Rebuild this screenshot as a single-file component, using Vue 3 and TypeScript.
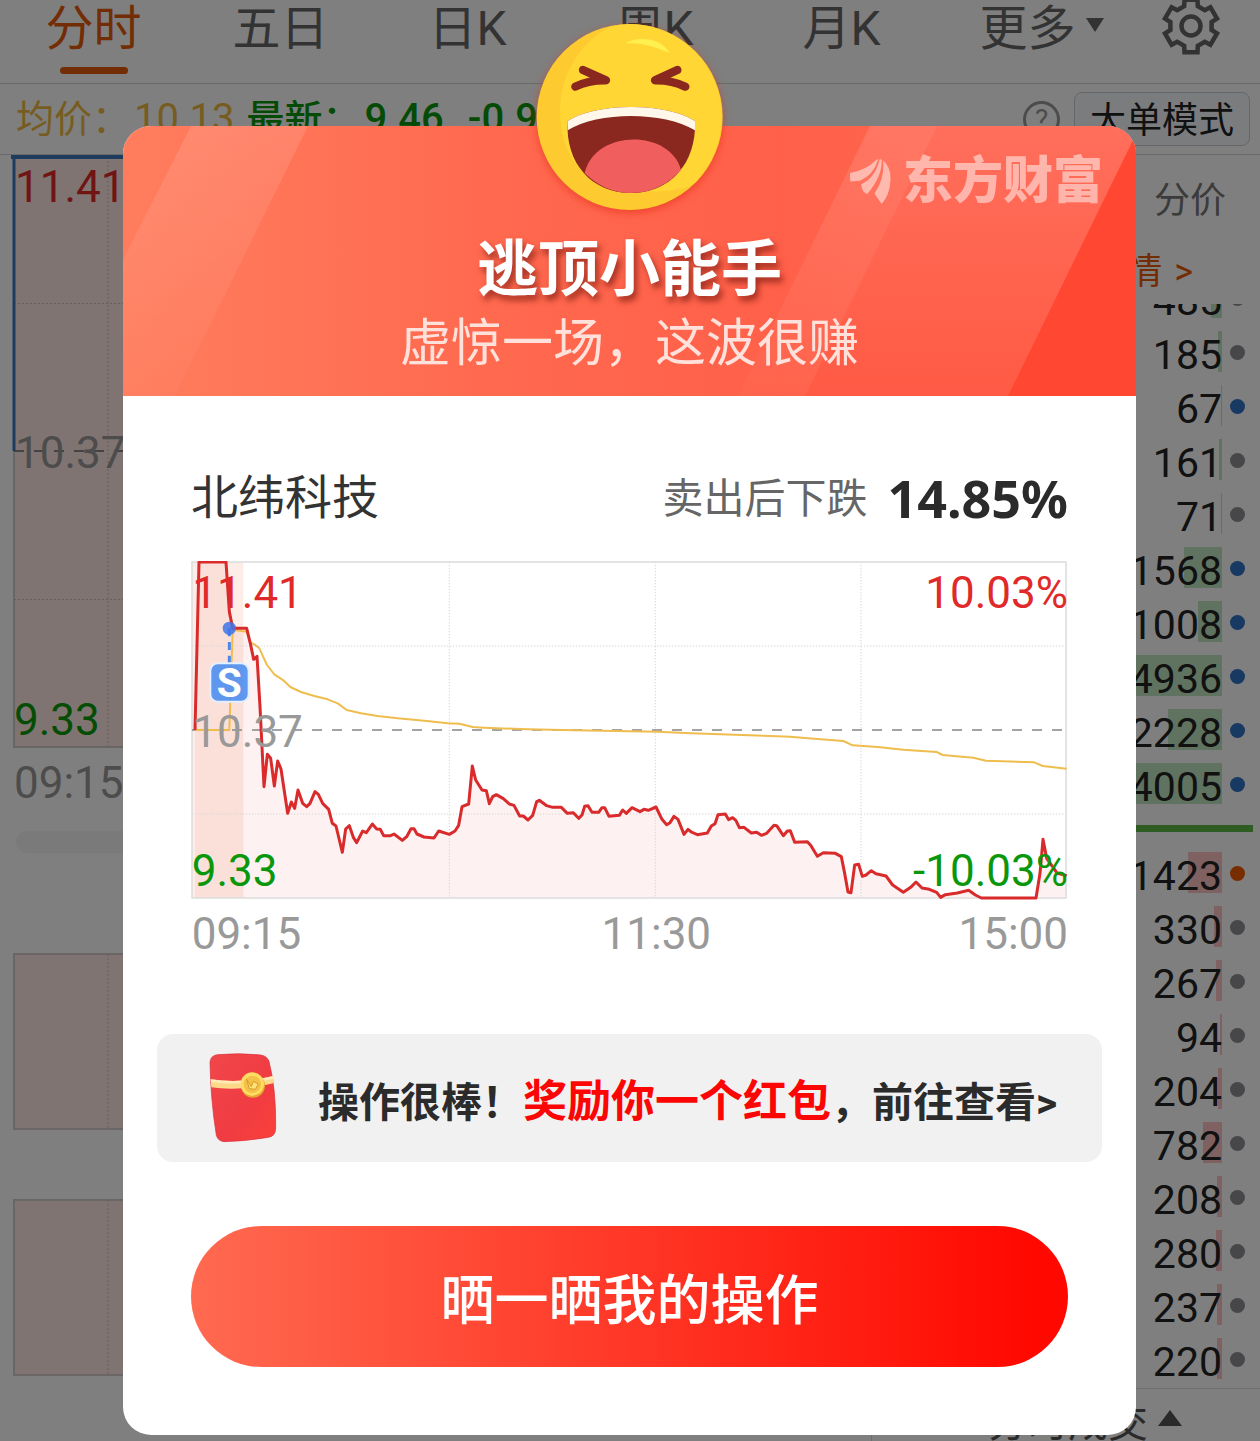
<script setup lang="ts">
type Tone = 'blue' | 'gray' | 'orange'
interface Tick { volume: number; tone: Tone }

const tabs = ['分时', '五日', '日K', '周K', '月K']

const sells: Tick[] = [
  { volume: 485, tone: 'gray' },
  { volume: 185, tone: 'gray' },
  { volume: 67, tone: 'blue' },
  { volume: 161, tone: 'gray' },
  { volume: 71, tone: 'gray' },
  { volume: 1568, tone: 'blue' },
  { volume: 1008, tone: 'blue' },
  { volume: 4936, tone: 'blue' },
  { volume: 2228, tone: 'blue' },
  { volume: 4005, tone: 'blue' },
]
const buys: Tick[] = [
  { volume: 1423, tone: 'orange' },
  { volume: 330, tone: 'gray' },
  { volume: 267, tone: 'gray' },
  { volume: 94, tone: 'gray' },
  { volume: 204, tone: 'gray' },
  { volume: 782, tone: 'gray' },
  { volume: 208, tone: 'gray' },
  { volume: 280, tone: 'gray' },
  { volume: 237, tone: 'gray' },
  { volume: 220, tone: 'gray' },
]
const barWidth = (volume: number) => `${Math.max(1, Math.floor(volume / 41))}px`

// Outline of the settings gear: six teeth around the centre
const gearPoints = Array.from({ length: 6 }, (_, k) => {
  const at = (radius: number, offset: number) => {
    const a = ((k * 60 - 90 + offset) * Math.PI) / 180
    return `${(30 + radius * Math.cos(a)).toFixed(1)},${(30 + radius * Math.sin(a)).toFixed(1)}`
  }
  return [at(21, -19), at(27, -14), at(27, 14), at(21, 19)].join(' ')
}).join(' ')

const price =
  '12,507 24,3 105,3 115,152 125,202 167,202 179,252 188,295 198,286 207,437 219,677 229,580 239,592 250,675 260,600 270,624 290,757 301,723 311,742 321,687 335,727 347,737 357,727 372,692 382,700 395,727 413,745 424,787 435,795 454,874 464,804 475,794 487,829 497,845 515,810 526,815 544,789 557,804 568,805 578,824 599,824 609,819 634,838 647,827 660,803 669,803 678,819 699,828 729,831 743,810 775,820 792,810 803,793 813,737 833,729 844,615 ' +
  '854,657 873,687 886,689 895,728 905,707 916,701 937,713 955,729 969,733 986,765 997,765 1011,777 1025,763 1037,722 1045,718 1067,734 1085,739 1111,739 1129,757 1147,755 1163,772 1173,762 1181,736 1191,734 1203,754 1223,754 1233,740 1241,740 1254,766 1285,763 1295,747 1306,757 1323,740 1347,752 1359,745 1372,748 1395,738 1413,775 1427,791 1437,785 1449,766 1461,775 1479,820 1491,805 1501,813 1519,821 1549,816 1561,795 1572,788 1581,761 1603,759 1613,776 1625,770 1635,779 1645,800 1659,799 1681,816 1697,814 1711,823 1727,817 1749,793 1757,794 ' +
  '1777,824 1789,810 1798,809 1811,844 1849,842 1859,853 1879,886 1897,875 1933,877 1951,887 1961,937 1971,993 1980,995 1991,912 2003,910 2014,946 2025,942 2041,929 2055,938 2085,945 2105,972 2137,994 2159,979 2175,963 2193,981 2215,985 2237,994 2249,1009 2263,1001 2299,996 2333,988 2353,1002 2371,1011 2535,1011 2547,937 2556,835 2567,892 2599,937 2627,944'
const priceArea = `12,1011 ${price} 2627,1011`
const average =
  '12,507 115,507 125,206 167,212 177,244 190,250 205,262 228,312 250,340 277,358 298,378 330,393 370,405 410,415 440,427 467,447 510,457 560,465 620,472 700,479 770,487 805,488 845,498 880,500 1010,505 1150,508 1400,512 1500,517 1737,525 1797,527 1870,533 1957,540 1985,553 2060,558 2137,566 2237,573 2255,582 2347,590 2385,599 2530,604 2555,615 2627,623'
</script>

<template>
  <div class="app">
    <main class="page">
      <nav class="tabs">
        <button v-for="(tab, i) in tabs" :key="tab" class="tab" :class="{ active: i === 0 }">{{ tab }}</button>
        <button class="tab more">更多<span class="caret"></span></button>
        <button class="tab gear" aria-label="设置">
          <svg viewBox="0 0 60 60" width="60" height="60" fill="none" stroke="#666" stroke-width="4.5">
            <polygon :points="gearPoints" stroke-linejoin="miter" />
            <circle cx="30" cy="30" r="9.5" />
          </svg>
        </button>
      </nav>

      <section class="info">
        <span class="avg">均价：</span><span class="avg num">10.13</span>
        <span class="now first">最新：</span><span class="now num">9.46</span><span class="now num diff">-0.91</span>
        <span class="help">?</span>
        <button class="mode">大单模式</button>
      </section>

      <section class="columns">
        <div class="left">
          <svg class="back-chart" viewBox="0 0 871 1233">
            <g fill="#ffe9e2" stroke="#d2cdca" stroke-width="2">
              <rect x="14" y="2" width="850" height="590" />
              <rect x="14" y="799" width="850" height="175" />
              <rect x="14" y="1045" width="850" height="175" />
            </g>
            <g stroke="#c8bfbb" stroke-width="1" stroke-dasharray="2 2">
              <path d="M108 2V592M108 799V974M108 1045V1220M14 148.500H864M14 444.500H864" />
            </g>
            <path d="M14 296H864" stroke="#888" stroke-width="2" stroke-dasharray="10 10" />
            <path d="M11 2H864" stroke="#3d78bd" stroke-width="4" />
            <path d="M14 2V296" stroke="#3d78bd" stroke-width="3" />
            <rect x="16" y="676" width="840" height="22" rx="11" fill="#f4f4f4" />
            <g font-size="44">
              <text x="15" y="47" fill="#e02828">11.41</text>
              <text x="15" y="313" fill="#999">10.37</text>
              <text x="14" y="580" fill="#0a9a0a">9.33</text>
              <text x="14" y="643" fill="#999">09:15</text>
            </g>
          </svg>
        </div>

        <aside class="right">
          <div class="switch">分价</div>
          <a class="detail" href="#"><span>详情</span><span>&gt;</span></a>
          <div class="ticks">
            <div v-for="tick in sells" :key="tick.volume" class="tick">
              <span class="volume"><i class="bar green" :style="{ width: barWidth(tick.volume) }"></i><b>{{ tick.volume }}</b></span>
              <i class="dot" :class="tick.tone"></i>
            </div>
          </div>
          <div class="divider"></div>
          <div v-for="tick in buys" :key="tick.volume" class="tick">
            <span class="volume"><i class="bar red" :style="{ width: barWidth(tick.volume) }"></i><b>{{ tick.volume }}</b></span>
            <i class="dot" :class="tick.tone"></i>
          </div>
          <div class="deals">分时成交<span class="up"></span></div>
        </aside>
      </section>
    </main>

    <div class="mask">
      <div class="dialog" role="dialog" aria-labelledby="dialog-title">
        <header class="hero">
          <svg class="hero-bg" viewBox="0 0 1013 270" preserveAspectRatio="none">
            <defs>
              <linearGradient id="hero-base" x1="0" x2="1" y1="0" y2="0">
                <stop offset="0" stop-color="#ff7d5e" />
                <stop offset=".35" stop-color="#ff6a4f" />
                <stop offset=".65" stop-color="#ff6049" />
                <stop offset="1" stop-color="#ff6c56" />
              </linearGradient>
              <linearGradient id="hero-band" x1="0" x2="0" y1="0" y2="1">
                <stop offset="0" stop-color="#fff" stop-opacity=".12" />
                <stop offset="1" stop-color="#fff" stop-opacity=".02" />
              </linearGradient>
              <linearGradient id="hero-side" x1="0" x2="0" y1="0" y2="1">
                <stop offset="0" stop-color="#ff6f5c" />
                <stop offset="1" stop-color="#ff5a44" />
              </linearGradient>
            </defs>
            <rect width="1013" height="270" fill="url(#hero-base)" />
            <polygon points="68,0 185,0 52,270 0,270 0,134" fill="url(#hero-band)" />
            <polygon points="814,0 1013,0 1013,270 682,270" fill="url(#hero-side)" />
            <polygon points="747,0 814,0 682,270 615,270" fill="url(#hero-band)" />
            <polygon points="1013,8 1013,270 885,270" fill="#ff4731" />
          </svg>

          <div class="brand">
            <svg viewBox="0 0 124 136" width="41" height="45" fill="#fff">
              <path d="M0 42Q48 34 80 2L86 0Q70 50 30 66L2 68Q-2 55 0 42Z" />
              <path d="M34 76Q76 58 90 0L96 2Q98 52 52 106Q36 100 34 76Z" />
              <path d="M74 104Q106 60 100 4Q126 28 122 68Q120 108 96 136Q86 122 74 104Z" />
            </svg>
            <span>东方财富</span>
          </div>

          <svg class="emoji" viewBox="0 0 660 630" width="220" height="210">
            <circle cx="329" cy="321" r="279" fill="#fdca30" />
            <path d="M270 50C180 100 120 190 120 305C120 450 220 570 385 545C450 543 520 540 540 500A279 279 0 0 0 329 42Q300 42 270 50Z" fill="#ffd634" />
            <path d="M316 99C350 80 420 78 449 129C410 112 370 98 316 99Z" fill="#fff04f" />
            <g fill="none" stroke="#8a271f" stroke-width="25" stroke-linecap="round" stroke-linejoin="round">
              <path d="M189 180L258 211Q205 210 166 230" />
              <path d="M472 180L405 211Q455 210 496 230" />
            </g>
            <path d="M143 333C230 277 438 277 525 333C530 460 450 549 333 549C215 549 135 460 143 333Z" fill="#8a271f" />
            <path d="M143 333C230 277 438 277 525 333V361C430 304 235 304 143 361Z" fill="#fff8ea" />
            <path d="M194 489C225 357 450 357 483 480C445 523 395 549 333 549C275 549 230 525 194 489Z" fill="#f15e5e" />
          </svg>

          <h1 id="dialog-title">逃顶小能手</h1>
          <p>虚惊一场，这波很赚</p>
        </header>

        <section class="content">
          <div class="stock">
            <span class="name">北纬科技</span>
            <span class="label">卖出后下跌</span>
            <strong>14.85%</strong>
          </div>

          <svg class="chart" viewBox="0 0 2631 1200">
            <rect x="3" y="3" width="154" height="1008" fill="#fdede6" />
            <polygon :points="priceArea" fill="#e43030" fill-opacity=".065" />
            <g fill="none">
              <path d="M775 3V1011M1393 3V1011M2010 3V1011M3 255H2625M3 759H2625" stroke="#d6d6d6" stroke-width="3" stroke-dasharray="4 5" />
              <rect x="3" y="3" width="2622" height="1008" stroke="#dfdfdf" stroke-width="5" />
              <path d="M3 507H2625" stroke="#858585" stroke-width="5" stroke-dasharray="30 30" />
              <polyline :points="average" stroke="#efbd4e" stroke-width="6" stroke-linejoin="round" />
              <polyline :points="price" stroke="#d92b2b" stroke-width="9" stroke-linejoin="round" />
            </g>
            <g font-size="132">
              <text x="4" y="141" fill="#e02a2a">11.41</text>
              <text x="2631" y="141" text-anchor="end" fill="#e02a2a">10.03%</text>
              <text x="4" y="557" fill="#999">10.37</text>
              <text x="2" y="974" fill="#0b970b">9.33</text>
              <text x="2631" y="974" text-anchor="end" fill="#0b970b">-10.03%</text>
              <g fill="#999">
                <text x="2" y="1164">09:15</text>
                <text x="1396" y="1164" text-anchor="middle">11:30</text>
                <text x="2631" y="1164" text-anchor="end">15:00</text>
              </g>
            </g>
            <path d="M115 202V308" stroke="#4c86e8" stroke-width="9" stroke-dasharray="24 17" />
            <circle cx="115" cy="202" r="20" fill="#3f74e8" fill-opacity=".85" />
            <rect x="58" y="307" width="115" height="115" rx="22" fill="#4f8ff0" fill-opacity=".9" stroke="#e4efff" stroke-width="6" />
            <text x="115" y="407" text-anchor="middle" class="marker">S</text>
          </svg>

          <a class="reward" href="#">
            <svg viewBox="0 0 300 360" width="100" height="120">
              <defs>
                <linearGradient id="packet" x1="0" x2="1" y1="0" y2="1">
                  <stop offset="0" stop-color="#f0474b" />
                  <stop offset=".6" stop-color="#f03c42" />
                  <stop offset="1" stop-color="#fb4038" />
                </linearGradient>
              </defs>
              <path d="M82 44Q150 38 212 45Q231 48 237 64Q259 150 257 266Q256 288 236 292Q165 304 102 305Q84 303 79 286Q62 180 60 66Q62 47 82 44Z" fill="url(#packet)" stroke="#d92d38" stroke-width="2" />
              <path d="M62 118Q150 132 250 108V130Q150 154 64 142Z" fill="#ffd98a" />
              <path d="M62 118Q150 132 250 108V116Q150 138 63 126Z" fill="#ffebb8" />
              <circle cx="189" cy="137" r="36" fill="#e5a92c" />
              <circle cx="187" cy="132" r="35" fill="#ffdc62" />
              <circle cx="187" cy="133" r="26" fill="#f3c04a" />
              <path d="M170 118L184 140L190 124L205 132L196 148L178 146Z" fill="#ffe27a" stroke="#d79c26" stroke-width="3" />
            </svg>
            <span>操作很棒！<em>奖励你一个红包</em>，前往查看&gt;</span>
          </a>

          <button class="share">晒一晒我的操作</button>
        </section>
      </div>
    </div>
  </div>
</template>

<style>
body {
  margin: 0;
}
</style>

<style scoped>
.app {
  position: relative;
  height: 100vh;
  overflow: hidden;
  background: #fff;
  font-family: Roboto, "Noto Sans CJK SC", sans-serif;
  color: #222;
}
button {
  padding: 0;
  border: 0;
  background: none;
  font-family: inherit;
  color: inherit;
}
a {
  color: inherit;
  text-decoration: none;
}

/* Quote page under the mask */
.tabs {
  display: flex;
  height: 83px;
  padding-right: 26px;
  border-bottom: 1px solid #d4d4d4;
}
.tab {
  position: relative;
  flex: 187 1 0;
  height: 57px;
  font-size: 48px;
  line-height: 57px;
  color: #666;
  white-space: nowrap;
}
.tab.active {
  color: #e65a0a;
}
.tab.active::after {
  content: "";
  position: absolute;
  left: 50%;
  top: 67px;
  width: 68px;
  height: 7px;
  margin-left: -34px;
  border-radius: 4px;
  background: #e65a0a;
}
.tab.more {
  display: flex;
  flex-grow: 213;
  align-items: center;
  justify-content: center;
  gap: 10px;
}
.caret {
  margin-bottom: 8px;
  border: 9px solid transparent;
  border-top: 14px solid #666;
  border-bottom: 0;
}
.tab.gear {
  display: flex;
  flex-grow: 86;
  align-items: center;
  justify-content: center;
  height: 52px;
}
.info {
  display: flex;
  align-items: center;
  height: 70px;
  padding: 0 10px 0 16px;
  border-bottom: 1px solid #d4d4d4;
  font-size: 38px;
  line-height: 56px;
  white-space: nowrap;
}
.num {
  margin-left: 4px;
  font-size: 40px;
}
.avg {
  color: #efb942;
}
.now {
  color: #0a960a;
  font-weight: 500;
}
.first {
  margin-left: 12px;
}
.diff {
  margin-left: 24px;
}
.help {
  width: 31px;
  height: 31px;
  margin: 0 14px 0 auto;
  border: 3px solid #999;
  border-radius: 50%;
  font-size: 28px;
  line-height: 31px;
  text-align: center;
  color: #999;
}
.mode {
  width: 176px;
  height: 54px;
  padding-top: 4px;
  border: 1px solid #c8cdd4;
  border-radius: 8px;
  background: #f7f9fc;
  font-size: 36px;
  line-height: 48px;
  color: #222;
}
.columns {
  display: flex;
}
.left {
  flex: 871 1 0;
}
.back-chart {
  display: block;
  width: 100%;
}
.right {
  flex: 389 1 0;
  text-align: right;
}
.switch {
  height: 88px;
  padding-right: 34px;
  font-size: 36px;
  line-height: 92px;
  color: #777;
}
.detail {
  display: flex;
  justify-content: flex-end;
  gap: 12px;
  height: 54px;
  padding-right: 67px;
  font-size: 36px;
  line-height: 58px;
  color: #e65a0a;
}
.ticks {
  margin-top: 7px;
  overflow: hidden;
}
.ticks .tick:first-child {
  margin-top: -33px;
}
.tick {
  display: flex;
  align-items: center;
  justify-content: flex-end;
  gap: 8px;
  height: 54px;
  padding-right: 15px;
}
.volume {
  position: relative;
  height: 54px;
  font-size: 41px;
  line-height: 60px;
}
.volume b {
  position: relative;
  font-weight: 400;
}
.bar {
  position: absolute;
  top: 6px;
  right: 0;
  height: 41px;
}
.green {
  background: #bfe6c0;
}
.red {
  background: #ffc2c2;
}
.dot {
  width: 15px;
  height: 15px;
  border-radius: 50%;
  background: #8e8e92;
}
.dot.blue {
  background: #2f72c4;
}
.dot.orange {
  background: #f05a00;
}
.divider {
  height: 7px;
  margin: 14px 7px 14px 0;
  background: #5cb847;
}
.deals {
  display: flex;
  align-items: center;
  justify-content: flex-end;
  gap: 10px;
  height: 62px;
  margin-top: 2px;
  padding-right: 78px;
  border-top: 1px solid #dcdcdc;
  border-left: 1px solid #dcdcdc;
  font-size: 40px;
  color: #555;
}
.up {
  margin-bottom: 4px;
  border: 12px solid transparent;
  border-top: 0;
  border-bottom: 16px solid #555;
}

/* Dialog */
.mask {
  position: absolute;
  inset: 0;
  padding: 126px 124px 0 123px;
  background: rgba(0, 0, 0, 0.5);
}
.dialog {
  border-radius: 28px;
  background: #fff;
}
.hero {
  position: relative;
  padding: 105px 0 22px;
  text-align: center;
  color: #fff;
}
.hero-bg {
  position: absolute;
  inset: 0;
  width: 100%;
  height: 100%;
  border-radius: 28px 28px 0 0;
}
.brand {
  position: absolute;
  top: 25px;
  right: 33px;
  display: flex;
  align-items: center;
  gap: 12px;
  font-size: 50px;
  font-weight: 900;
  line-height: 60px;
  opacity: 0.5;
}
.emoji {
  position: absolute;
  top: -116px;
  left: 50%;
  margin-left: -110px;
  filter: drop-shadow(0 3px 4px rgba(225, 40, 20, 0.55));
}
.hero h1 {
  position: relative;
  margin: 0;
  font-size: 61px;
  font-weight: 700;
  line-height: 78px;
  text-shadow: 3px 5px 6px rgba(110, 20, 10, 0.65);
}
.hero p {
  position: relative;
  margin: 5px 0 0;
  font-size: 51px;
  line-height: 60px;
  color: #ffe1dc;
}
.content {
  padding: 71px 68px 68px;
}
.stock {
  display: flex;
  height: 60px;
  line-height: 62px;
  white-space: nowrap;
}
.name {
  margin-right: auto;
  font-size: 47px;
  color: #333;
}
.label {
  margin-right: 20px;
  font-size: 41px;
  line-height: 64px;
  color: #666;
}
.stock strong {
  font-family: "Noto Sans", sans-serif;
  font-size: 52px;
  font-weight: 700;
  color: #2b2b2b;
}
.chart {
  display: block;
  width: 100%;
  margin-top: 34px;
}
.marker {
  font-size: 122px;
  font-weight: 700;
  fill: #fff;
}
.reward {
  display: flex;
  align-items: center;
  height: 128px;
  margin: 73px -34px 0;
  padding-left: 33px;
  border-radius: 16px;
  background: #f1f1f1;
  font-size: 41px;
  font-weight: 700;
  color: #2b2b2b;
  white-space: nowrap;
}
.reward svg {
  margin-top: 4px;
}
.reward span {
  margin-left: 28px;
}
.reward em {
  font-size: 44px;
  font-style: normal;
  color: #fb0505;
}
.share {
  display: block;
  width: 100%;
  height: 141px;
  margin-top: 64px;
  border-radius: 71px;
  background: linear-gradient(90deg, #ff6a50, #ff0800 96%);
  font-size: 54px;
  font-weight: 500;
  color: #fff;
}
</style>
